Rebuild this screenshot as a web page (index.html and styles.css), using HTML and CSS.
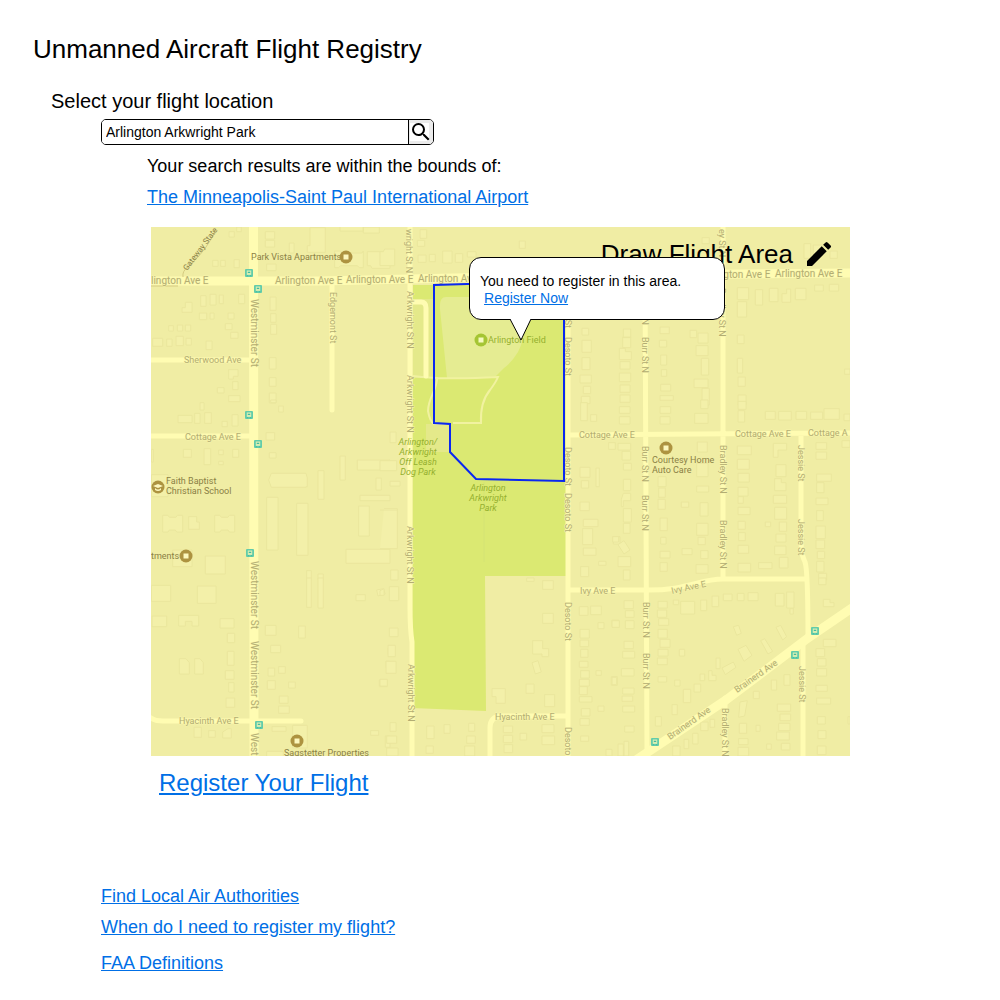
FILE: index.html
```html
<!DOCTYPE html>
<html lang="en">
<head>
<meta charset="utf-8">
<meta name="viewport" content="width=device-width, initial-scale=1">
<title>Unmanned Aircraft Flight Registry</title>
<link rel="stylesheet" href="styles.css">
</head>
<body>
<header class="page-header">
  <h1 class="title">Unmanned Aircraft Flight Registry</h1>
</header>
<main class="content">
  <form class="search">
    <label class="search-label" for="location">Select your flight location</label>
    <div class="search-box">
      <input class="search-input" id="location" type="text" value="Arlington Arkwright Park">
      <button class="search-button" type="button" aria-label="Search">
        <svg class="search-icon" viewBox="0 0 24 24"><path class="icon-back" d="M1 3h19v18H1z"/><path d="M15.5 14h-.79l-.28-.27A6.47 6.47 0 0 0 16 9.5 6.5 6.5 0 1 0 9.5 16c1.61 0 3.09-.59 4.23-1.57l.27.28v.79l5 4.99L20.49 19l-4.99-5zm-6 0C7.01 14 5 11.99 5 9.5S7.01 5 9.5 5 14 7.01 14 9.5 11.99 14 9.5 14z"/></svg>
      </button>
    </div>
  </form>
  <section class="results">
    <p>Your search results are within the bounds of:</p>
    <p><a href="#airport">The Minneapolis-Saint Paul International Airport</a></p>
  </section>

  <section class="map" aria-label="Flight map">
    <svg class="map-art" viewBox="151 227 699 529">
      <defs>
        <g id="place"><circle r="6.5" fill="#ad9340"/><path d="M-2.5-2.5h5v5h-5z" fill="#fcf7bd"/></g>
        <g id="stop"><rect x="-4" y="-4" width="8" height="8" rx="1" fill="#62ccaa"/><path d="M-2.2-2.5h4.4v4.4h-4.4z" fill="#d8efb2"/><path d="M-1.2-1.3h2.4v1.2h-2.4zM-2.2 2.2h1.2v1h-1.2zM1 2.2h1.2v1H1z" fill="#43bba0"/></g>
      </defs>
      <path class="land" d="M151 227h699v529H151z"/>

      <!-- buildings, one group per map tile -->
      <g class="buildings">
        <g transform="translate(150 225) scale(.3333)"><path d="M237 20h16v16h-16zM260 6h14v14h-14zM346 20h28v22h-28zM346 46h28v20h-28zM350 117h28v20h-28zM480 8h46v74h-54v-20h8zM418 54h14v30h-14zM570 0h70v18h-70zM640 6h48v18h-48zM554 78h18l4 6h60l4-6v50h-12l-6-6h-50l-6 6h-12zM652 80h68v50h-54l-4-8h-10zM188 106h16v18h-16zM212 106h14v18h-14zM252 104h16v24h-16zM152 212h16v32h-16zM180 208h18v32h-18zM208 210h12v26h-12zM266 208h18v28h-18zM106 232h20v30h-30v-14h10zM148 264h22v20h-22zM180 264h12v18h-12zM234 264h18v18h-18zM226 296h20v18h-20zM242 322h22v18h-22zM56 302h14v16h-14zM82 300h16v18h-16zM106 300h16v18h-16zM8 340h30v24h-30zM50 342h16v22h-16zM78 334h22v28h-22zM108 340h16v20h-16zM168 348h18v26h-18zM360 216h18v40h-18zM362 266h16v26h-16zM362 298h18v30h-18zM358 398h20v34h-20zM358 458h20v26h-20zM358 504h20v30h-20zM236 434h28v20h-14v8h-14zM248 470h16v24h-16zM202 488h20v16h-20zM236 512h34v18h-34z"/></g>
        <g transform="translate(380 225) scale(.3333)"><path d="M0 80h10l4-8h30v50H0zM112 46h22v18h-22zM120 14h20v26h-20zM114 90h24v22h-24zM148 88h18v22h-18zM188 78h28v36h-28zM226 86h22v26h-22zM418 48h18v22h-18zM262 80h26v16h-26zM606 310h20v20h-20zM606 346h28v36h-28zM606 398h24v36h-24zM600 450h34v24h-34zM610 484h22v22h-22zM604 514h26v22h-26z"/></g>
        <g transform="translate(610 225) scale(.3333)"><path d="M276 38h22v18h-22zM582 56h20v44h-20zM610 60h30v30h-30zM660 78h22v22h-22zM382 188h34v36h-34zM382 230h28v46h-28zM436 194h22v46h-22zM478 190h26v40h-26zM516 206h14v-14h12v40h-26zM556 190h32v34h-32zM614 180h26v18h-26zM658 178h28v20h-28zM40 312h22v26h-22zM38 336h24v32h-24zM28 370h18v10h18v24H28zM30 410h30v22H30zM28 444h34v26H28zM30 480h30v22H30zM30 510h30v22H30zM150 306h28v20h-28zM148 346h22v20h-22zM152 390h18v30h-18zM154 434h16v20h-16zM152 478h30v20h-30zM150 512h40v14h-40zM240 316h20v22h-20zM264 324h30v30h-30zM258 362h36v30h-36zM274 400h22v50h-22zM252 462h42v26h-42zM276 490h22v50h-22zM382 330h20v26h-20zM382 400h16v44h-16zM384 456h22v28h-22zM384 510h24v30h-24zM704 432h16v16h-16z"/></g>
        <g transform="translate(150 400) scale(.3333)"><path d="M150 8h12v22h-12zM84 46h42v22H84zM134 40h16v30h-16zM164 38h20v32h-20zM246 44h18v34h-18zM216 64h16v16h-16zM100 148h24v24h-24zM162 146h20v48h-20zM206 150h14v14h-14zM206 184h14v10h-14zM248 148h18v24h-18zM4 148h6v38H4zM4 224h50v66H4zM362 0h16v8h-16zM386 18h14v18h-14zM348 98h26v22h-26zM358 158h20v16h-20zM364 220h104l4 14v26h-4v2H364l-8-22zM350 292h34v158h-34zM440 310h34v156h-34zM504 212h18v86h-18zM570 168h16v72h-16zM622 180h98v30h-98zM678 234h16v36h-16zM630 286h90v16h-90zM626 318h32v90h-32zM704 326h16v120h-16zM588 448h132v42H588zM38 346h16l4 6h20l4-6h16v50H80l-4-6H58l-4 6H38zM116 350h24v16h8v22h-32zM194 346h16l4 6h20l4-6h16v50h-16l-4-6h-20l-4 6h-16zM68 450h58v50H68zM166 468h60v54h-60zM470 512h14v28h-14zM504 522h16v18h-16z"/></g>
        <g transform="translate(380 400) scale(.3333)"><path d="M0 182h50v30H0zM30 96h18v32H30zM30 244h30v14H30zM0 330h54M12 326h40v120H0M32 510h22v30H32zM602 8h20v54h-20zM632 44h18v20h-18zM686 128h20v20h-20zM600 202h30v30h-30zM648 204h10v56h-10zM604 242h22v22h-22zM600 306h28v26h-28zM610 358h44v22h-44zM608 386h30v48h-30zM610 444h38v22h-38zM602 500h24v30h-24zM656 484h22v12h-22zM700 410h20v22h-20z"/></g>
        <g transform="translate(610 400) scale(.3333)"><path d="M28 20h32v20H28zM28 50h32v22H28zM24 130h38v20H24zM36 154h26v26H36zM40 190h24v20H40zM40 238h22v34H40zM40 280h22v22H40v18h-6v-22zM40 326h24v40H40zM40 370h20v30H40zM24 434l18-12 18 28-18 12zM8 410h18v16H8zM24 470h38v30H24zM40 510h20v30H40zM150 20h32v20h-32zM150 50h30v22h-30zM272 0h22v26h-22zM254 40h40v30h-40zM384 4h24v24h-24zM384 32h20v34h-20zM466 34h30v24h-30zM506 34h38v26h-38zM558 34h32v24h-32zM602 36h36v22h-36zM642 26h46v32h-46zM702 42h18v20h-18zM144 230h24v30h-24zM146 264h20v28h-20zM144 298h22v30h-22zM214 306h22v16h-22zM150 354h22v38h-22zM152 412h16v20h-16zM150 454h30v20h-30zM150 488h22v26h-22zM262 126h30v30h-30zM260 190h34v40h-34zM260 258h36v18h-36zM270 308h24v40h-24zM260 370h34v36h-34zM264 412h22v22h-22zM272 452h22v24h-22zM258 494h36v26h-36zM216 446h30v18h-30zM382 138h42v26h-42zM382 178h36v30h-36zM384 220h34v26h-34zM384 262h30v26h-30zM384 290h16v20h-16zM384 322h36v22h-36zM384 364h22v24h-22zM386 398h20v24h-20zM384 436h32v24h-32zM384 490h38v26h-38zM490 130h40v20h-26v22h-14zM498 194h30v36h-30zM494 236h20v12h14v24h-34zM490 286h40v24h-40zM494 322h36v36h-36zM508 366h22v28h-22zM498 402h30v24h-30zM494 438h34v26h-34zM508 472h26v32h-26zM466 366h16v14h-16zM446 488h40v18h-40zM618 128h32v20h-32zM618 156h32v22h-32zM620 222h44v22h-44zM620 248h22v30h-22zM618 294h36v20h-36zM620 332h20v30h-20zM618 378h28v38h-28zM618 420h26v26h-26zM622 454h22v22h-22zM620 484h22v32h-22zM626 520h24v20h-24zM696 122h24v20h-24z"/></g>
        <g transform="translate(150 578) scale(.3333)"><path d="M4 22h58v48H4zM142 24h56v52h-56zM470 0h14v88h-14zM504 0h16v90h-16zM6 114h44v32H6zM86 112h60v32h-20v-14h-20v14H86zM210 122h42v28h-42zM232 166h22v28h-22zM232 220h20v42h-20zM226 278h26v26h-26zM236 314h16v28h-16zM228 360h26v28h-26zM88 242h20l10 12v34H88zM134 242h16l10 12v34h-26zM346 142h32v30h-32zM362 202h30v22h-30zM446 144h20v36h-20zM386 266h20v20h-20zM354 270h20v24h-20zM352 308h24v26h-24zM416 312h20v18h-20zM388 354h26v22h-26zM386 384h32v22h-32zM366 446h42v14h-42zM428 442h44v68h-44zM132 448h22v30h-22zM176 458h20v20h-20zM218 462l16-10h10v28h-26zM618 50h28v18h-28zM680 36l20-4 6 16-22 6zM688 306h24v20h-24zM714 210h6v20h-6zM708 250h12v20h-12zM662 458h24v14h-24zM706 474h14v34h-14zM350 520h50v20h-50z"/></g>
        <g transform="translate(380 578) scale(.3333)"><path d="M28 26h28v42H28zM0 38l12-6v20H0zM28 150h26v26H28zM24 202h22v34H24zM18 250h30v36H18zM0 304h22v20H0zM30 434h18v26H30zM20 474h30v22H20zM20 510h34v24H20zM140 444h22v38h-22zM138 504h22v22h-22zM192 440h18v26h-18zM266 436h18v24h-18zM260 474h26v22h-26zM254 504h30v30h-30zM488 8h32v26h-32zM440 0h22v10h-22zM488 106h32v30h-32zM458 188h30v24h18v24h-20v-8h-28zM456 254l18-6 10 34-18 6zM336 332h40v44h-28v-20h-12zM438 318h24v28h-24zM494 350h30v36h-30zM370 444h28v20h-28zM370 472h28v22h-28zM372 500h26v24h-26zM420 466h20v20h-20zM486 440h36v24h-36zM486 474h38v26h-38zM598 86h26v26h-26zM632 84h32v26h-32zM600 154h28v26h-28zM600 186h26v20h-26zM602 214h22v24h-22zM598 250h26v18h-26zM602 278h26v22h-26zM598 304h30v20h-30zM598 326h24v24h-24zM598 356h38v16h-38zM604 392h26v22h-26zM600 422h28v20h-28zM602 474h24v16h-24zM654 134h18v18h-18zM648 278h16v14h-16zM654 384h18v16h-18zM696 126h20v20h-20zM694 296h18v26h-18zM678 514h18v20h-18z"/></g>
        <g transform="translate(610 578) scale(.3333)"><path d="M42 68h28v24H42zM46 98h26v20H46zM6 128h22v20H6zM46 128h26v24H46zM42 190h28v22H42zM38 220h36v20H38zM34 272h38v22H34zM6 298h14v22H6zM38 330h34v18H38zM36 354h32v16H36zM38 384h36v18H38zM44 444h28v18H44zM24 498h16v36H24zM42 490h14v44H42zM144 70h28v20h-28zM142 96h28v22h-28zM146 122h30v20h-30zM144 154h28v26h-28zM150 184h30v24h-30zM144 214h30v20h-30zM142 240h30v20h-30zM144 296h26v16h-26zM190 66h16v14h-16zM212 70h42v38h-42zM272 66h18v32h-18zM306 54h20v32h-20zM340 48h26v20h-26zM382 46h20v22h-20zM414 44h30v24h-30zM496 46h26v38h-26zM530 42h22v48h-22zM540 92h10v16h-10zM208 214h16v20h-16zM370 146l16-4 8 24-14 6zM384 214l24-12 18 30-24 18zM452 188l12-6 24 38-14 8zM498 148l14-6 18 34-12 10zM336 270l34-18 8 16-32 22zM318 240h12v32h-12zM270 288h14v20h-14zM296 278h10v14h12v16h-22zM252 318h20v24h-20zM194 306h16v18h-16zM220 334h22v40h-22zM186 380h16v30h-16zM136 416h18v28h-18zM390 372l22-4-8 46-18 4zM388 436h22v30h-22zM386 482h28v18h-28zM384 508h32v26h-32zM430 340h18v22h-18zM438 442h12v18h-12zM484 306h16v30h-16zM522 290h18v32h-18zM502 378h40v22h-40zM510 408h32v20h-32zM506 436h34v22h-34zM500 462h38v24h-38zM514 496h26v20h-26zM470 498h14v16h-14zM272 432h22v26h-22zM300 424h14v24h-14zM248 466h16v32h-16zM222 484h14v28h-14zM188 504h22v30h-22zM618 212h26v24h-26zM622 242h26v22h-26zM620 272h30v22h-30zM618 322h34v18h-34zM620 360h42v18h-42zM622 416h24v22h-24zM624 458h24v24h-24zM622 504h26v26h-26zM640 184h38v22h-38zM640 64h20v10h12v12h-32zM714 416h6v22h-6zM626 0h22v20h-22z"/></g>
      </g>

      <!-- park land -->
      <path class="park" d="M413 285h153v291h-81l1 135-74-3z"/>
      <path class="lot" d="M413 299h20v79h-20zM426 424h24v28h-24z"/>
      <path class="field" d="M446 297h80v27q-2 16-8 28-6 10-14 16l-8 8-16 2h-33l-7-69q-1-12 6-12z"/>
      <path class="paths" d="M413 376q30 4 85 1-2 5-8 13-10 12-9 33h-28M437 377c1 12-9 20-9 34q2 11 6 13h16"/>
      <path class="seam" d="M484 482v80"/>

      <!-- streets -->
      <g class="roads">
        <path class="wide" d="M151 281H320L540 276 850 273M253.500 227L254 756"/>
        <path d="M151 360h102M151 436h102M332 280v130M410 227v380q0 22 2 35v114M413 302h8q5 0 5 6v68M568 275v481M568 435l282-2M645 275l2 477M723 227v352M801 434v108q0 12 4 20 3 8 3 78M803 640v116M568 590h75c45 1 55-11 80-11h82M151 718q4 3 12 3h138M568 716h-66q-12 0-12 12v28M725 698v58"/>
        <path class="wide" d="M636 760L726 700 808 638 852 608"/>
      </g>
      <path class="trail" d="M216 229q-8 20-28 38-6 4-5 10M151 286h27"/>

      <g class="street-names">
        <g class="major">
          <text x="151" y="284">lington Ave E</text>
          <text x="275" y="284">Arlington Ave E</text>
          <text x="346" y="283">Arlington Ave E</text>
          <text x="418" y="282">Arlington Ave E</text>
          <text x="703" y="278">Arlington Ave E</text>
          <text x="775" y="277">Arlington Ave E</text>
          <text transform="translate(251 299) rotate(90)">Westminster St</text>
          <text transform="translate(251 561) rotate(90)">Westminster St</text>
          <text transform="translate(251 641) rotate(90)">Westminster St</text>
          <text transform="translate(251 733) rotate(90)">West</text>
        </g>
        <text x="184" y="363">Sherwood Ave</text>
        <text x="185" y="440">Cottage Ave E</text>
        <text x="579" y="438">Cottage Ave E</text>
        <text x="735" y="437">Cottage Ave E</text>
        <text x="808" y="436">Cottage A</text>
        <text x="580" y="594">Ivy Ave E</text>
        <text transform="translate(672 594) rotate(-12)">Ivy Ave E</text>
        <text x="179" y="724">Hyacinth Ave E</text>
        <text x="495" y="720">Hyacinth Ave E</text>
        <text transform="translate(330 292) rotate(90)">Edgemont St</text>
        <text transform="translate(406 229) rotate(90)">wright St N</text>
        <text transform="translate(407 291) rotate(90)">Arkwright St N</text>
        <text transform="translate(407 375) rotate(90)">Arkwright St N</text>
        <text transform="translate(407 526) rotate(90)">Arkwright St N</text>
        <text transform="translate(408 664) rotate(90)">Arkwright St N</text>
        <text transform="translate(565 289) rotate(90)">Desoto St</text>
        <text transform="translate(565 337) rotate(90)">Desoto St</text>
        <text transform="translate(565 447) rotate(90)">Desoto St</text>
        <text transform="translate(565 493) rotate(90)">Desoto St</text>
        <text transform="translate(565 602) rotate(90)">Desoto St</text>
        <text transform="translate(565 727) rotate(90)">Desoto</text>
        <text transform="translate(642 289) rotate(90)">Burr St N</text>
        <text transform="translate(642 337) rotate(90)">Burr St N</text>
        <text transform="translate(642 446) rotate(90)">Burr St N</text>
        <text transform="translate(642 495) rotate(90)">Burr St N</text>
        <text transform="translate(643 602) rotate(90)">Burr St N</text>
        <text transform="translate(643 653) rotate(90)">Burr St N</text>
        <text transform="translate(719 229) rotate(90)">ey St N</text>
        <text transform="translate(719 288) rotate(90)">Bradley St N</text>
        <text transform="translate(720 445) rotate(90)">Bradley St N</text>
        <text transform="translate(720 520) rotate(90)">Bradley St N</text>
        <text transform="translate(722 708) rotate(90)">Bradley St N</text>
        <text transform="translate(798 445) rotate(90)">Jessie St</text>
        <text transform="translate(798 519) rotate(90)">Jessie St</text>
        <text transform="translate(799 666) rotate(90)">Jessie St</text>
        <text transform="translate(737 693) rotate(-35)">Brainerd Ave</text>
        <text transform="translate(670 740) rotate(-35)">Brainerd Ave</text>
      </g>
      <text class="place-name trail-name" transform="translate(187 271) rotate(-53)">Gateway State</text>
      <g class="place-name">
        <text x="251" y="260">Park Vista Apartments</text>
        <text x="166" y="484">Faith Baptist</text>
        <text x="166" y="494">Christian School</text>
        <text x="151" y="559">tments</text>
        <text x="652" y="463">Courtesy Home</text>
        <text x="652" y="473">Auto Care</text>
        <text x="284" y="756">Sagstetter Properties</text>
      </g>
      <g class="park-name">
        <text class="upright" x="488" y="343">Arlington Field</text>
        <text x="418" y="445">Arlington/</text>
        <text x="418" y="455">Arkwright</text>
        <text x="418" y="465">Off Leash</text>
        <text x="418" y="475">Dog Park</text>
        <text x="488" y="491">Arlington</text>
        <text x="488" y="501">Arkwright</text>
        <text x="488" y="511">Park</text>
      </g>
      <use href="#place" x="346" y="257"/>
      <use href="#place" x="186" y="556"/>
      <use href="#place" x="666" y="448"/>
      <use href="#place" x="297" y="741"/>
      <circle cx="158" cy="487" r="6.500" fill="#ad9340"/>
      <path d="M153 486l5-2 5 2-5 2zM155 488q3 3 6 0v2q-3 2-6 0z" fill="#fcf7bd"/>
      <circle cx="481" cy="340" r="6.500" fill="#a5c533"/><path d="M478.500 337.500h5v5h-5z" fill="#f5fac0"/>
      <use href="#stop" x="249" y="273"/><use href="#stop" x="258" y="289"/>
      <use href="#stop" x="249" y="415"/><use href="#stop" x="258" y="444"/>
      <use href="#stop" x="250" y="553"/><use href="#stop" x="259" y="725"/>
      <use href="#stop" x="815" y="631"/><use href="#stop" x="795" y="655"/><use href="#stop" x="655" y="742"/>

      <path class="flight-area" d="M564 284H467L434 285V423L450 424V452L476 479 564 481z"/>
    </svg>

    <button class="draw" type="button">
      <span>Draw Flight Area</span>
      <svg class="pencil" viewBox="0 0 24 24"><path d="M3 17.250V21h3.750L17.810 9.940l-3.750-3.750L3 17.250zM20.710 7.040a1 1 0 0 0 0-1.410l-2.340-2.340a1 1 0 0 0-1.410 0l-1.830 1.830 3.750 3.750 1.830-1.830z"/></svg>
    </button>
    <div class="callout">
      <p>You need to register in this area.</p>
      <a class="callout-link" href="#register">Register Now</a>
      <svg class="tail" viewBox="0 0 24 22"><path d="M2 0L13 21 23 0" fill="#fff"/><path d="M2 0L13 21 23 0" fill="none" stroke="#000"/></svg>
    </div>
  </section>
  <a class="register" href="#register">Register Your Flight</a>

  <nav class="links">
    <a href="#authorities">Find Local Air Authorities</a>
    <a href="#when">When do I need to register my flight?</a>
    <a class="last" href="#definitions">FAA Definitions</a>
  </nav>
</main>
</body>
</html>
```
FILE: styles.css
```css
* { box-sizing: border-box; }

body {
  margin: 0;
  padding: 34px 0 26px;
  background: #fff;
  color: #000;
  font: 18px/20px "Liberation Sans", Arial, sans-serif;
}

h1, p { margin: 0; font-weight: 400; }
a { color: #006fe6; }

.page-header { padding-left: 33px; }
.title { font-size: 26px; line-height: 30px; }

.search { padding: 25px 20px 0 51px; }
.search-label { display: block; font-size: 20px; line-height: 24px; }

.search-box {
  display: flex;
  width: 333px;
  max-width: 100%;
  height: 26px;
  margin: 6px 0 0 50px;
  border: 1px solid #000;
  border-radius: 5px;
  overflow: hidden;
}
.search-input {
  flex: 1;
  min-width: 0;
  padding: 0 4px;
  border: 0;
  outline: 0;
  background: #fff;
  color: #000;
  font: 14px/24px "Liberation Sans", Arial, sans-serif;
}
.search-button {
  width: 25px;
  padding: 0;
  border: 0;
  border-left: 1px solid #000;
  background: #ebebeb;
}
.search-icon { display: block; width: 24px; height: 24px; }
.icon-back { fill: #fff; }

.results {
  display: flex;
  flex-direction: column;
  gap: 11px;
  padding: 11px 20px 0 147px;
}

.map { position: relative; margin: 20px 150px 0 151px; }
.map-art { display: block; width: 100%; height: auto; }

.land { fill: #f0eda4; }
.buildings { fill: #f3f0a9; stroke: #eae69d; stroke-width: 3; }
.park { fill: #dbe972; }
.lot { fill: #e4e98a; }
.field { fill: #e5ec92; }
.paths { fill: none; stroke: #f1f2a0; stroke-width: 2; }
.seam { stroke: #d4e374; }
.roads { fill: none; stroke: #fffcb2; stroke-width: 5; stroke-linecap: round; stroke-linejoin: round; }
.roads .wide { stroke-width: 9; }
.trail { fill: none; stroke: #d5cb80; stroke-width: 1; }
.flight-area { fill: none; stroke: #0a28f0; stroke-width: 2; }

.map-art text { font-family: Roboto, sans-serif; font-size: 9px; }
.map-art .major text { font-size: 10px; }
.map-art .trail-name { font-size: 8px; }
.street-names { fill: #b3ad72; stroke: #f8f5ac; stroke-width: 1; paint-order: stroke; }
.place-name { fill: #8a8044; }
.park-name { fill: #95b02f; font-style: italic; text-anchor: middle; }
.park-name .upright { font-style: normal; text-anchor: start; }

.draw {
  position: absolute;
  top: 11px;
  right: 15px;
  display: flex;
  align-items: center;
  gap: 10px;
  padding: 0;
  border: 0;
  background: none;
  color: #000;
  font: 26px/32px "Liberation Sans", Arial, sans-serif;
}
.pencil { width: 32px; height: 32px; }

.callout {
  position: absolute;
  top: 30px;
  left: 45.5%;
  width: 256px;
  height: 63px;
  padding: 15px 10px;
  border: 1px solid #000;
  border-radius: 12px;
  background: #fff;
  font-size: 14px;
  line-height: 17px;
}
.callout-link { margin-left: 4px; }
.tail { position: absolute; top: 61px; left: 38px; width: 24px; height: 22px; }

.register {
  display: inline-block;
  margin: 13px 0 0 159px;
  font-size: 24px;
  line-height: 28px;
}

.links {
  display: flex;
  flex-direction: column;
  align-items: flex-start;
  gap: 11px;
  padding: 89px 20px 0 101px;
}
.links .last { margin-top: 5px; }
```
